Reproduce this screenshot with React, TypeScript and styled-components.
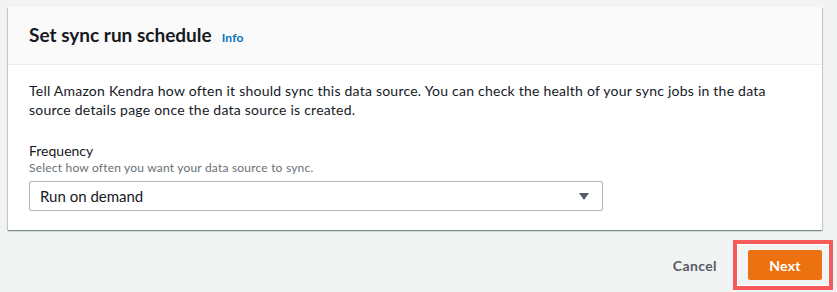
import React from "react";
import styled, { createGlobalStyle } from "styled-components";

const GlobalStyle = createGlobalStyle`
  html, body {
    margin: 0;
    padding: 0;
    background: #f2f3f3;
  }
  body {
    font-family: Lato, "Open Sans", Arial, sans-serif;
    color: #16191f;
    -webkit-font-smoothing: antialiased;
  }
`;

const Page = styled.div`
  width: 837px;
  height: 292px;
  box-sizing: border-box;
  padding: 7px 15px 0 8px;
  overflow: hidden;
`;

const Card = styled.section`
  background: #fff;
  box-shadow: 0 1px 1px 0 rgba(0, 28, 36, 0.3), 1px 1px 1px 0 rgba(0, 28, 36, 0.15),
    -1px 1px 1px 0 rgba(0, 28, 36, 0.15);
`;

const CardHeader = styled.header`
  display: flex;
  align-items: baseline;
  height: 58px;
  box-sizing: border-box;
  padding: 17px 20px 0 21px;
  background: #fafafa;
  border-bottom: 1px solid #eaeded;
`;

const Title = styled.h2`
  margin: 0;
  font-size: 19px;
  line-height: 22px;
  font-weight: 700;
  color: #16191f;
`;

const InfoLink = styled.a`
  margin-left: 10px;
  font-size: 12px;
  font-weight: 700;
  letter-spacing: 0.2px;
  color: #0073bb;
  text-decoration: none;
`;

const CardBody = styled.div`
  padding: 16px 20px 19px 21px;
`;

const Description = styled.p`
  margin: 0;
  font-size: 14px;
  line-height: 19px;
  letter-spacing: 0.23px;
`;

const Field = styled.div`
  display: flex;
  flex-direction: column;
  margin-top: 22px;
`;

const Label = styled.label`
  font-size: 14px;
  line-height: 19px;
  color: #16191f;
`;

const Hint = styled.span`
  font-size: 12px;
  line-height: 16px;
  letter-spacing: 0.2px;
  color: #687078;
  margin-bottom: 5px;
`;

const Select = styled.div`
  display: flex;
  align-items: center;
  justify-content: space-between;
  width: 574px;
  height: 30px;
  box-sizing: border-box;
  padding: 0 13px 0 10px;
  border: 1px solid #aab7b8;
  border-radius: 2px;
  background: #fff;
  font-size: 15px;
  color: #16191f;
`;

const Footer = styled.div`
  display: flex;
  justify-content: flex-end;
  align-items: center;
  margin-top: 10px;
  margin-right: -11px;
`;

const CancelButton = styled.button`
  border: none;
  background: none;
  padding: 0;
  margin-right: 16px;
  font-family: inherit;
  font-size: 14px;
  font-weight: 700;
  letter-spacing: 0.4px;
  color: #545b64;
  cursor: pointer;
`;

const Highlight = styled.div`
  display: flex;
  padding: 6px 7px 6px 11px;
  border: 4px solid #f65b5b;
  box-shadow: inset 0 0 0 1px #fff;
`;

const PrimaryButton = styled.button`
  width: 74px;
  height: 30px;
  border: none;
  border-radius: 2px;
  background: #ec7211;
  color: #fff;
  font-family: inherit;
  font-size: 14px;
  font-weight: 700;
  letter-spacing: 0.3px;
  cursor: pointer;
`;

const Caret = () => (
  <svg width="10" height="7" viewBox="0 0 10 7">
    <path d="M0 0h10L5 7z" fill="#545b64" />
  </svg>
);

const App = () => (
  <>
    <GlobalStyle />
    <Page>
      <Card>
        <CardHeader>
          <Title>Set sync run schedule</Title>
          <InfoLink href="#">Info</InfoLink>
        </CardHeader>
        <CardBody>
          <Description>
            Tell Amazon Kendra how often it should sync this data source. You can check the health of your sync
            jobs in the data source details page once the data source is created.
          </Description>
          <Field>
            <Label>Frequency</Label>
            <Hint>Select how often you want your data source to sync.</Hint>
            <Select>
              <span>Run on demand</span>
              <Caret />
            </Select>
          </Field>
        </CardBody>
      </Card>
      <Footer>
        <CancelButton>Cancel</CancelButton>
        <Highlight>
          <PrimaryButton>Next</PrimaryButton>
        </Highlight>
      </Footer>
    </Page>
  </>
);

export default App;
